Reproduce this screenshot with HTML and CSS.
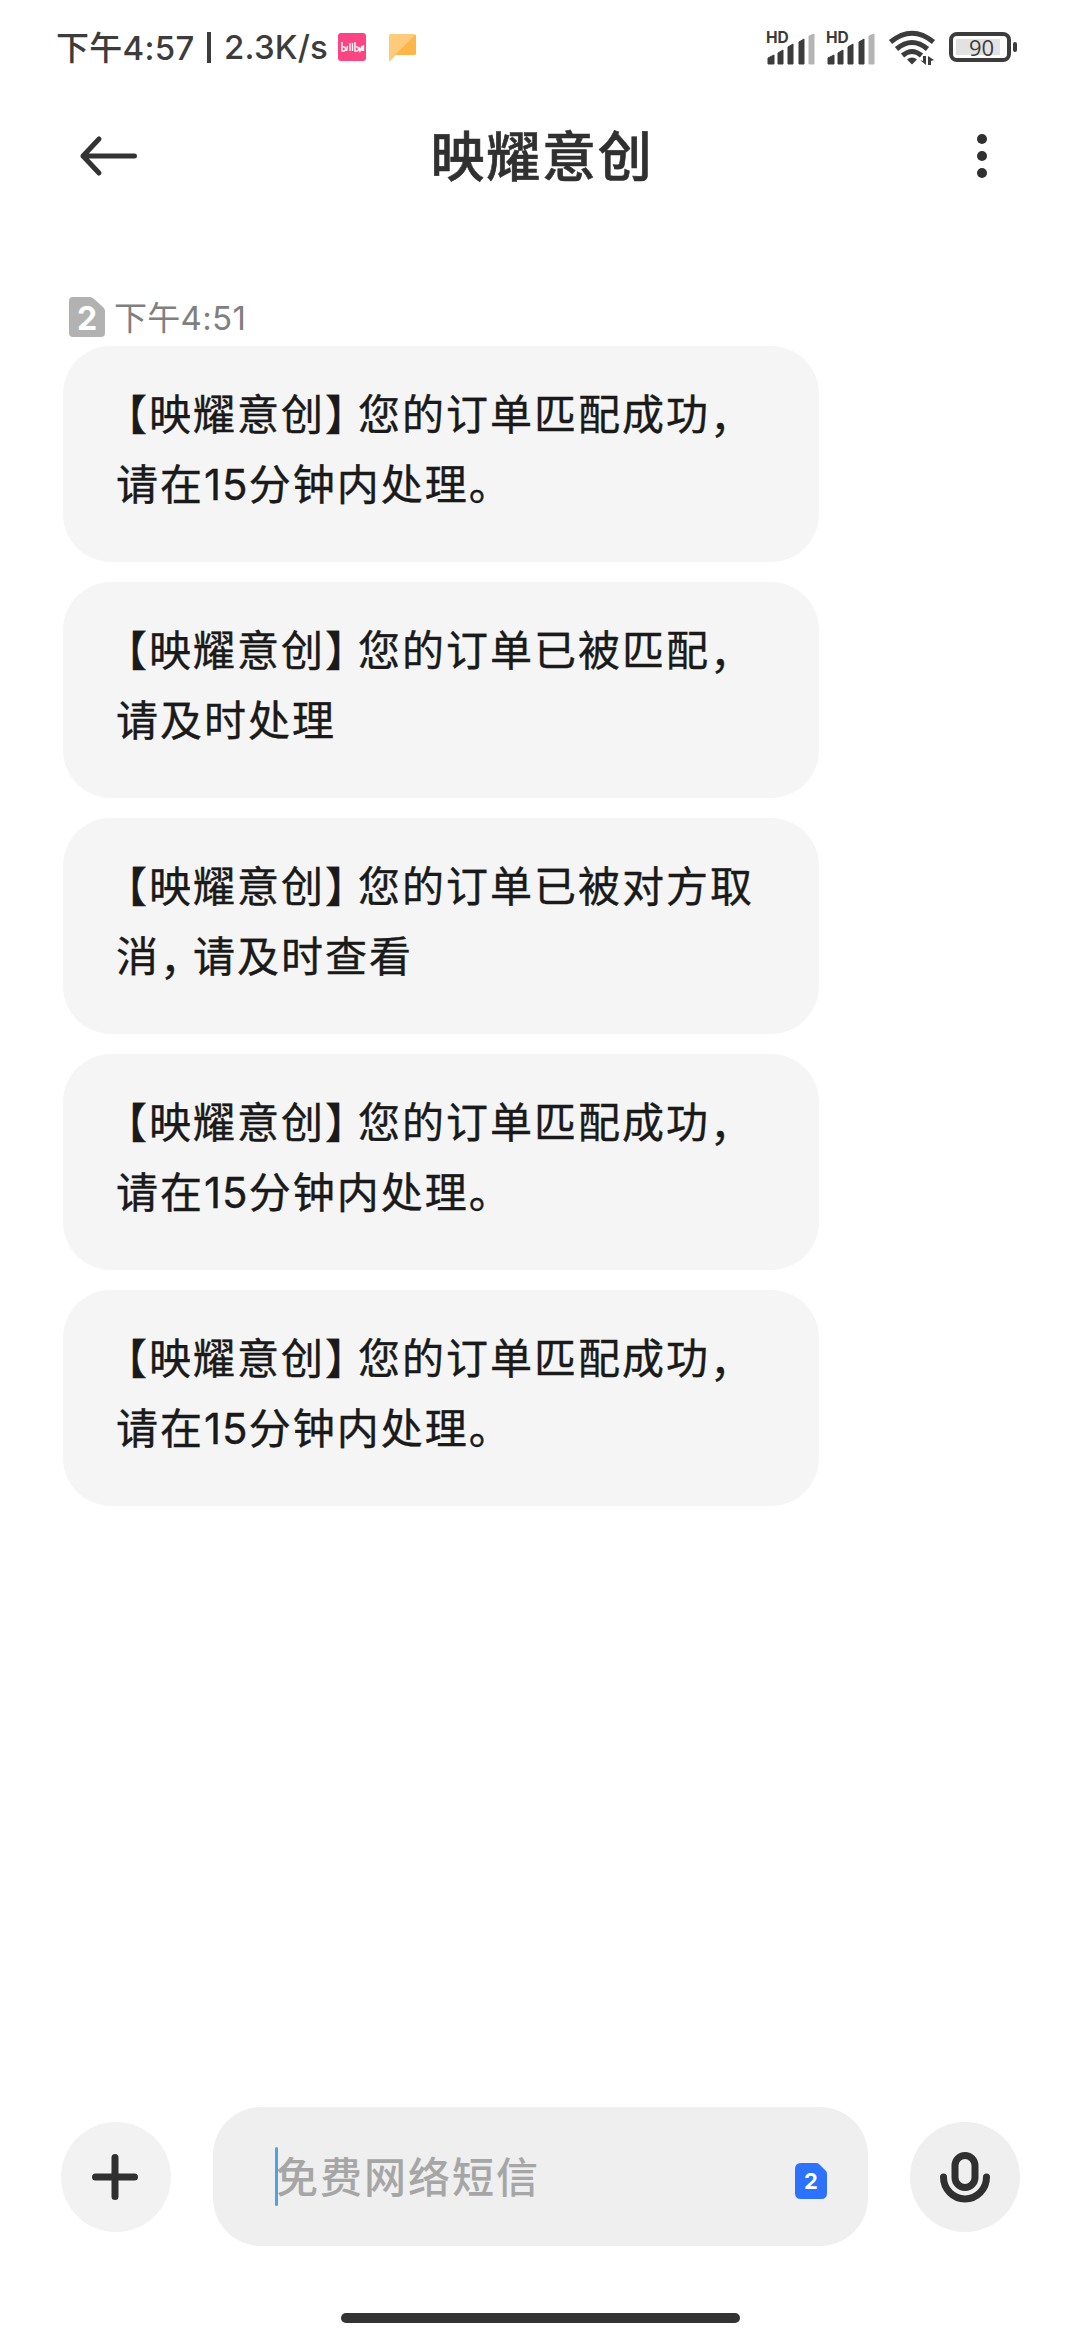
FILE: index.html
```html
<!DOCTYPE html>
<html lang="zh-CN">
<head>
    <meta charset="UTF-8">
    <meta name="viewport" content="width=device-width, initial-scale=1.0">
    <title>映耀意创</title>
    <link rel="stylesheet" href="styles.css">
</head>
<body>
    <div class="status-bar">
        <div class="status-left">
            <span class="clock">下午<span class="latin">4:57</span></span>
            <span class="divider"></span>
            <span class="latin speed">2.3K/s</span>
            <svg class="app-icon" width="28" height="28" viewBox="0 0 28 28">
                <rect width="28" height="28" rx="3" fill="#fb4482"/>
                <path d="M4 9v9c5 1 4-5 1-4M9.500 13l-1 5M12 10v8M14.500 10v8M17 9v9c5 1 4-5 1-4M21 14l1 4 2-5v5M25.500 12v6" fill="none" stroke="#fff" stroke-width="1.400"/>
            </svg>
            <svg class="note-icon" width="27" height="29" viewBox="0 0 27 29">
                <path d="M2 1h23q2 0 2 2v17q0 2-2 2H7l-7 7V3q0-2 2-2z" fill="#fdcb7b"/>
                <path d="M26 2q1 0 1 1v17q0 2-2 2H6z" fill="#fdb647"/>
            </svg>
        </div>
        <div class="status-right">
            <svg class="signal" width="50" height="34" viewBox="0 0 50 34">
                <text x="0" y="13" class="hd">HD</text>
                <path d="M2 28l6-3v9H2zM12 23l5-3v14h-5zM22 17l5-3v20h-5zM33 12l5-3v25h-5z" class="bar"/>
                <path d="M43 6l5-2v30h-5z" class="bar off"/>
            </svg>
            <svg class="signal" width="50" height="34" viewBox="0 0 50 34">
                <text x="0" y="13" class="hd">HD</text>
                <path d="M2 28l6-3v9H2zM12 23l5-3v14h-5zM22 17l5-3v20h-5zM33 12l5-3v25h-5z" class="bar"/>
                <path d="M43 6l5-2v30h-5z" class="bar off"/>
            </svg>
            <svg class="wifi" width="46" height="36" viewBox="0 0 46 36">
                <g fill="none" stroke="#3c3c3c" stroke-width="5">
                    <path d="M1.500 13Q23-4.500 44.500 13"/>
                    <path d="M7.500 20Q23 7 38.500 20"/>
                    <path d="M13.500 26.500Q23 18.500 32.500 26.500"/>
                </g>
                <path d="M18 30.500q5-4 10 0l-5 5z" fill="#3c3c3c"/>
                <path d="M31 31l3 1v-5h3v9zM39 36v-9l6 4-3 1v4z" fill="#3c3c3c"/>
            </svg>
            <div class="battery"><span>90</span></div>
            <div class="battery-tip"></div>
        </div>
    </div>

    <header class="header">
        <svg width="58" height="40" viewBox="0 0 58 40">
            <path d="M54.500 20H3M19 3L3 20l16 17" fill="none" stroke="#333" stroke-width="5" stroke-linecap="round" stroke-linejoin="round"/>
        </svg>
        <h1>映耀意创</h1>
        <svg width="10" height="46" viewBox="0 0 10 46" fill="#303030">
            <circle cx="5" cy="6" r="5"/>
            <circle cx="5" cy="23" r="5"/>
            <circle cx="5" cy="40" r="5"/>
        </svg>
    </header>

    <main class="messages">
        <div class="time">
            <svg width="36" height="40" viewBox="0 0 36 40">
                <path d="M4 0h17q2 0 3.500 1.500l10 9Q36 12 36 14v22q0 4-4 4H4q-4 0-4-4V4q0-4 4-4z" fill="#b2b2b2"/>
                <text x="18" y="33" class="sim-number sim-large">2</text>
            </svg>
            <span>下午<span class="latin">4:51</span></span>
        </div>
        <div class="bubble">
            <span class="open">【</span>映耀意创<span class="narrow">】</span>您的订单匹配成功<span class="narrow comma">，</span><br>
            请在<span class="num">15</span>分钟内处理。
        </div>
        <div class="bubble">
            <span class="open">【</span>映耀意创<span class="narrow">】</span>您的订单已被匹配<span class="narrow comma">，</span><br>
            请及时处理
        </div>
        <div class="bubble">
            <span class="open">【</span>映耀意创<span class="narrow">】</span>您的订单已被对方取<br>
            消<span class="narrow comma">，</span>请及时查看
        </div>
        <div class="bubble">
            <span class="open">【</span>映耀意创<span class="narrow">】</span>您的订单匹配成功<span class="narrow comma">，</span><br>
            请在<span class="num">15</span>分钟内处理。
        </div>
        <div class="bubble">
            <span class="open">【</span>映耀意创<span class="narrow">】</span>您的订单匹配成功<span class="narrow comma">，</span><br>
            请在<span class="num">15</span>分钟内处理。
        </div>
    </main>

    <footer class="composer">
        <div class="round-btn plus">
            <svg width="46" height="46" viewBox="0 0 46 46">
                <path d="M23 3.500v39M3.500 23h39" stroke="#303030" stroke-width="7" stroke-linecap="round"/>
            </svg>
        </div>
        <div class="input">
            <span class="caret"></span>
            <span class="placeholder">免费网络短信</span>
            <svg width="32" height="36" viewBox="0 0 32 36">
                <path d="M6 0h15q2 0 3 1l7 7q1 1 1 3v19q0 6-6 6H6q-6 0-6-6V6q0-6 6-6z" fill="#2c72fb"/>
                <text x="16" y="26" class="sim-number sim-small">2</text>
            </svg>
        </div>
        <div class="round-btn mic">
            <svg width="50" height="52" viewBox="0 0 50 52" fill="none" stroke="#303030" stroke-width="7">
                <rect x="15" y="4.500" width="20" height="32" rx="10"/>
                <path d="M3.500 26a21.500 22 0 0 0 43 0" stroke-linecap="round"/>
            </svg>
        </div>
    </footer>
    <div class="home-bar"></div>
</body>
</html>
```
FILE: styles.css
```css
* {
    box-sizing: border-box;
}

body {
    margin: 0;
    width: 1080px;
    height: 2340px;
    display: flex;
    flex-direction: column;
    background-color: #fff;
    color: #1a1a1a;
    font-family: "Noto Sans CJK SC", sans-serif;
    overflow: hidden;
}

svg {
    display: block;
    flex-shrink: 0;
    overflow: visible;
}

.latin,
.num {
    font-family: Inter, "Noto Sans CJK SC", sans-serif;
}

.status-bar {
    height: 94px;
    padding: 0 63px 0 56px;
    display: flex;
    justify-content: space-between;
    align-items: center;
    color: #3c3c3c;
}

.status-left,
.status-right {
    display: flex;
    align-items: center;
}

.status-left {
    font-size: 33px;
    font-weight: 500;
    line-height: 48px;
    white-space: nowrap;
}

.clock {
    width: 151px;
    letter-spacing: 0.3px;
}

.divider {
    width: 4px;
    height: 31px;
    margin-right: 13px;
    background-color: #3c3c3c;
}

.speed {
    width: 114px;
    letter-spacing: 0.2px;
}

.note-icon {
    margin-left: 23px;
}

.signal {
    margin-right: 10px;
}

.hd {
    font: 700 15.5px Inter, sans-serif;
    fill: #3c3c3c;
}

.bar {
    fill: #3c3c3c;
    stroke: #3c3c3c;
    stroke-width: 1;
    stroke-linejoin: round;
}

.bar.off {
    fill: #b4b4b4;
    stroke: #b4b4b4;
}

.wifi {
    margin: 0 14px 0 3px;
}

.battery {
    width: 62px;
    height: 30px;
    padding: 3px 7px 3px 3px;
    border: 4px solid #3c3c3c;
    border-radius: 8px;
    display: flex;
}

.battery span {
    flex: 1;
    background-color: #e2e2e2;
    font: 500 22px/16px "Open Sans", sans-serif;
    padding-left: 13px;
}

.battery-tip {
    width: 4px;
    height: 10px;
    margin-left: 2px;
    border-radius: 2px;
    background-color: #3c3c3c;
}

.header {
    height: 124px;
    padding: 0 93px 0 80px;
    display: flex;
    align-items: center;
    color: #303030;
}

.header h1 {
    flex: 1;
    margin: -4px 0 0;
    padding-right: 31px;
    text-align: center;
    font-size: 54px;
    font-weight: 500;
    line-height: 80px;
    letter-spacing: 1.7px;
    -webkit-text-stroke: 0.6px #303030;
}

.messages {
    flex: 1;
    padding: 75px 63px 0;
}

.time {
    height: 53px;
    padding-left: 6px;
    display: flex;
    align-items: flex-start;
    gap: 9px;
    color: #808080;
    font-size: 33px;
    line-height: 46px;
    letter-spacing: 0.3px;
}

.time svg {
    margin-top: 4px;
}

.sim-number {
    font-family: Inter, sans-serif;
    font-weight: 700;
    letter-spacing: 0;
    fill: #fff;
    text-anchor: middle;
}

.sim-large {
    font-size: 32px;
}

.sim-small {
    font-size: 22px;
}

.bubble {
    width: 756px;
    height: 216px;
    margin-bottom: 20px;
    padding: 31px 0 0 53px;
    border-radius: 48px;
    background-color: #f5f5f5;
    font-size: 42px;
    line-height: 70px;
    letter-spacing: 2px;
    white-space: nowrap;
    -webkit-text-stroke: 0.4px #1a1a1a;
}

/* half-width punctuation */
.open,
.narrow {
    font-feature-settings: "halt";
}

.open {
    margin-left: 10px;
}

.narrow {
    margin-right: 10px;
}

.comma {
    line-height: 1;
    vertical-align: -3px;
}

.num {
    letter-spacing: 1px;
}

.composer {
    height: 139px;
    margin-bottom: 67px;
    padding: 0 60px 0 61px;
    display: flex;
    align-items: center;
    justify-content: space-between;
}

.round-btn {
    width: 110px;
    height: 110px;
    border-radius: 50%;
    background-color: #efefef;
    display: flex;
    align-items: center;
    justify-content: center;
}

.plus {
    background-color: #f2f2f2;
}

.plus svg {
    margin-right: 2px;
}

.input {
    width: 655px;
    height: 139px;
    padding: 0 41px 0 62px;
    border-radius: 48px;
    background-color: #efefef;
    display: flex;
    align-items: center;
}

.input svg {
    margin-top: 8px;
}

.caret {
    width: 3px;
    height: 59px;
    border-radius: 2px;
    background-color: #4fa3df;
}

.placeholder {
    flex: 1;
    margin: -4px 0 0 -2px;
    color: #a6a6a6;
    font-size: 42px;
    font-weight: 500;
    line-height: 60px;
    letter-spacing: 2px;
}

.home-bar {
    width: 399px;
    height: 10px;
    margin: 0 auto 17px;
    border-radius: 5px;
    background-color: #333;
}
```
